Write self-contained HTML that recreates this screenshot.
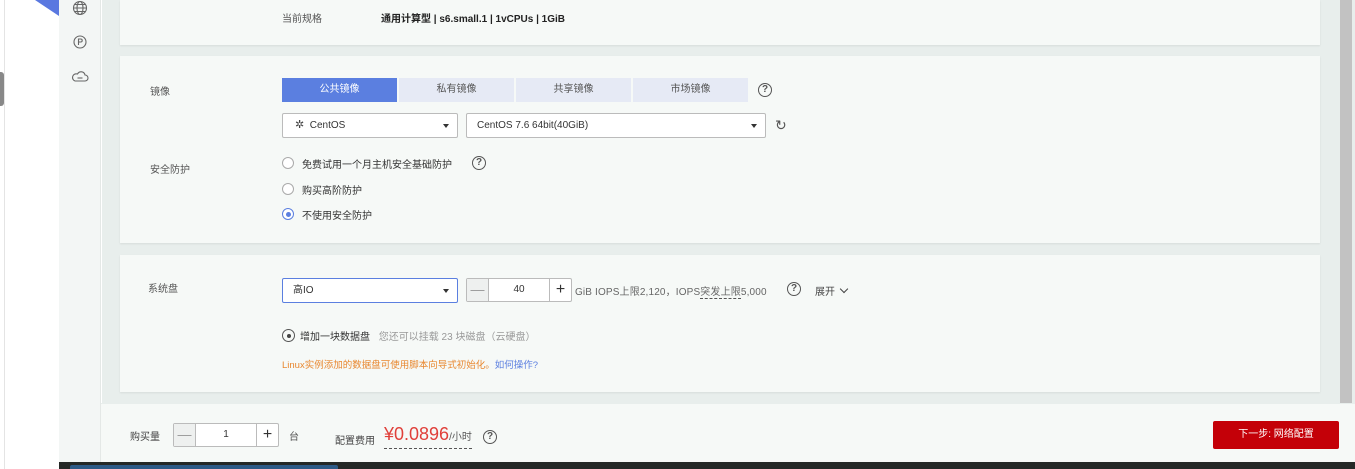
<!DOCTYPE html>
<html><head><meta charset="utf-8"><style>
*{margin:0;padding:0;box-sizing:border-box}
body{width:1355px;height:469px;overflow:hidden;position:relative;background:#fff;font-family:"Liberation Sans","Noto Sans CJK SC",sans-serif;font-size:10px;color:#333}
.a{position:absolute}
.card{position:absolute;left:120px;width:1200px;background:#f6f9f7;box-shadow:0 1px 2px rgba(0,0,0,.08)}
.lbl{position:absolute;font-size:10px;color:#555}
.tab{position:absolute;top:78px;height:24px;width:115px;background:#e6eaf5;color:#555;text-align:center;line-height:24px;font-size:10px}
.sel{position:absolute;height:25px;border:1px solid #bbb;background:#fff;border-radius:2px;font-size:10px;line-height:23px;padding-left:10px}
.tri{position:absolute;right:8px;top:10px;width:0;height:0;border-left:3.5px solid transparent;border-right:3.5px solid transparent;border-top:4px solid #333}
.q{position:absolute;width:14px;height:14px;border:1.3px solid #555;border-radius:50%;font-size:10px;line-height:12px;text-align:center;color:#555;font-weight:bold}
.rad{position:absolute;width:12px;height:12px;border:1px solid #aaa;border-radius:50%;background:#fff}
.rt{position:absolute;font-size:10px;color:#333}
.num{position:absolute;height:24px;border:1px solid #bbb;background:#fff;border-radius:2px}
.num .m{position:absolute;left:0;top:0;bottom:0;width:22px;background:#eef0ef;border-right:1px solid #bbb;text-align:center;line-height:20px;color:#999;font-size:14px}
.num .p{position:absolute;right:0;top:0;bottom:0;width:22px;border-left:1px solid #bbb;text-align:center;line-height:21px;color:#333;font-size:16px}
.num .v{position:absolute;left:22px;right:22px;top:0;text-align:center;line-height:22px;font-size:10px}
</style></head><body>
<div class="a" style="left:4px;top:0;width:1px;height:469px;background:#e4e4e4"></div>
<div class="a" style="left:0;top:72px;width:4px;height:34px;background:#888;border-radius:0 3px 3px 0"></div>
<div class="a" style="left:35px;top:0;width:24px;height:16px;background:#5a78e0;clip-path:polygon(0 0,100% 0,100% 100%)"></div>
<div class="a" style="left:59px;top:0;width:42px;height:462px;background:#f3f6f5;border-right:1px solid #e4e8e6"></div>
<svg class="a" style="left:71px;top:0" width="18" height="90" fill="none" stroke="#666" stroke-width="1.1">
<circle cx="9" cy="8" r="6.5"/><ellipse cx="9" cy="8" rx="3" ry="6.5"/><path d="M2.5 8h13M3.5 4.5h11M3.5 11.5h11"/>
<circle cx="9" cy="42" r="6"/><path d="M7.5 45V39h2.2a1.5 1.5 0 010 3H7.5"/>
<path d="M4 81h10a3 3 0 000-6 4 4 0 00-7.5-1A3.5 3.5 0 004 81z"/><path d="M6.5 78h5"/>
</svg>
<div class="a" style="left:102px;top:0;width:1238px;height:403px;background:#e8eeec"></div>
<div class="a" style="left:1340px;top:0;width:12px;height:403px;background:#c2c2c2"></div>
<div class="a" style="left:1352px;top:0;width:3px;height:403px;background:#e8eeec"></div>

<div class="card" style="top:0;height:45px">
<div class="lbl" style="left:162px;top:10px">当前规格</div>
<div class="a" style="left:261px;top:10px;font-weight:bold;font-size:10px;color:#222">通用计算型 | s6.small.1 | 1vCPUs | 1GiB</div>
</div>

<div class="card" style="top:56px;height:187px"></div>
<div class="lbl" style="left:150px;top:83px">镜像</div>
<div class="tab" style="left:282px;background:#5b7fe0;color:#fff">公共镜像</div>
<div class="tab" style="left:399px">私有镜像</div>
<div class="tab" style="left:516px">共享镜像</div>
<div class="tab" style="left:633px">市场镜像</div>
<div class="q" style="left:758px;top:83px">?</div>
<div class="sel" style="left:282px;top:113px;width:176px"><span style="margin-left:2px;font-size:11px;color:#444">✲</span>&nbsp; CentOS<div class="tri"></div></div>
<div class="sel" style="left:466px;top:113px;width:300px">CentOS 7.6 64bit(40GiB)<div class="tri"></div></div>
<div class="a" style="left:775px;top:117px;font-size:14px;color:#555">↻</div>
<div class="lbl" style="left:150px;top:161px">安全防护</div>
<div class="rad" style="left:282px;top:157px"></div><div class="rt" style="left:302px;top:156px">免费试用一个月主机安全基础防护</div>
<div class="q" style="left:472px;top:156px">?</div>
<div class="rad" style="left:282px;top:183px"></div><div class="rt" style="left:302px;top:182px">购买高阶防护</div>
<div class="rad" style="left:282px;top:208px;border-color:#5b7fe0"><div class="a" style="left:2.5px;top:2.5px;width:5px;height:5px;background:#5b7fe0;border-radius:50%"></div></div><div class="rt" style="left:302px;top:207px">不使用安全防护</div>

<div class="card" style="top:255px;height:137px"></div>
<div class="lbl" style="left:148px;top:280px">系统盘</div>
<div class="sel" style="left:282px;top:278px;width:176px;border-color:#5b7fe0">高IO<div class="tri"></div></div>
<div class="num" style="left:466px;top:278px;width:106px"><div class="m">—</div><div class="v">40</div><div class="p">+</div></div>
<div class="a" style="left:575px;top:283px;font-size:10px;color:#666;letter-spacing:0.15px">GiB IOPS上限2,120，IOPS<span style="border-bottom:1px dashed #555">突发上限</span>5,000</div>
<div class="q" style="left:787px;top:282px">?</div>
<div class="a" style="left:815px;top:283px;font-size:10px;color:#444">展开 <span style="display:inline-block;width:6px;height:6px;border-right:1.3px solid #444;border-bottom:1.3px solid #444;transform:rotate(45deg);margin:0 0 3px 3px"></span></div>
<div class="a" style="left:282px;top:329px;width:13px;height:13px;border:1.2px solid #555;border-radius:50%"><div class="a" style="left:3.5px;top:3.5px;width:4px;height:4px;background:#444;border-radius:50%"></div></div>
<div class="a" style="left:300px;top:328px;font-size:10px;color:#333">增加一块数据盘 <span style="color:#999;margin-left:6px">您还可以挂载 23 块磁盘（云硬盘）</span></div>
<div class="a" style="left:282px;top:357px;font-size:9.5px;color:#e8872f">Linux实例添加的数据盘可使用脚本向导式初始化。<span style="color:#5b7fe0">如何操作?</span></div>

<div class="a" style="left:101px;top:403px;width:1254px;height:59px;background:#f6f9f7;border-top:1px solid #e8eeec"></div>
<div class="lbl" style="left:130px;top:428px;color:#444">购买量</div>
<div class="num" style="left:173px;top:423px;width:106px"><div class="m">—</div><div class="v">1</div><div class="p">+</div></div>
<div class="lbl" style="left:289px;top:428px">台</div>
<div class="lbl" style="left:335px;top:432px;color:#444">配置费用</div>
<div class="a" style="left:384px;top:424px;font-size:18px;color:#e0403a;border-bottom:1px dashed #555;line-height:20px">¥0.0896<span style="font-size:10px;color:#555">/小时</span></div>
<div class="q" style="left:483px;top:430px">?</div>
<div class="a" style="left:1213px;top:421px;width:126px;height:28px;background:#c40008;border-radius:2px;color:#fff;font-size:10px;text-align:center;line-height:28px">下一步: 网络配置</div>

<div class="a" style="left:59px;top:462px;width:1296px;height:7px;background:#242826"></div>
<div class="a" style="left:70px;top:465px;width:268px;height:4px;background:#2d5a86;border-radius:2px 2px 0 0"></div>
</body></html>
